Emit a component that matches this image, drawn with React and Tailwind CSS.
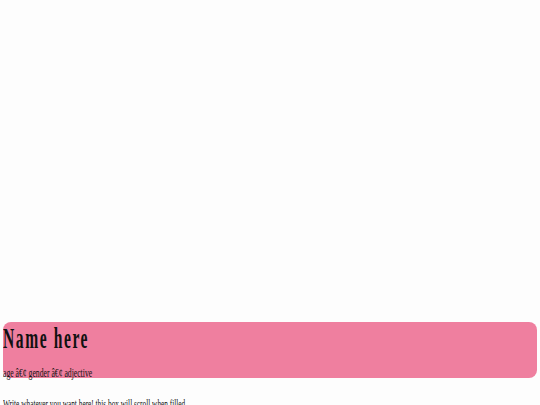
export default function App() {
  return (
    <div className="min-h-screen bg-[#fdfdfd] font-['Liberation_Serif',serif] text-[#111]">
      <div className="h-[322px]" />

      {/* profile header */}
      <div className="mx-[3px] h-[56px] rounded-lg bg-[#ef7f9f]">
        <h1 className="origin-left scale-x-[0.52] text-[30px] font-bold leading-none tracking-[3px] pt-[1px] whitespace-nowrap">
          Name here
        </h1>
        <p className="origin-left scale-x-[0.64] text-[12px] leading-none mt-[14px] whitespace-nowrap">
          age â€¢ gender â€¢ adjective
        </p>
      </div>

      <p className="origin-left scale-x-[0.61] text-[12px] leading-none mt-[20px] ml-[3px] whitespace-nowrap">
        Write whatever you want here! this box will scroll when filled
      </p>
    </div>
  );
}
